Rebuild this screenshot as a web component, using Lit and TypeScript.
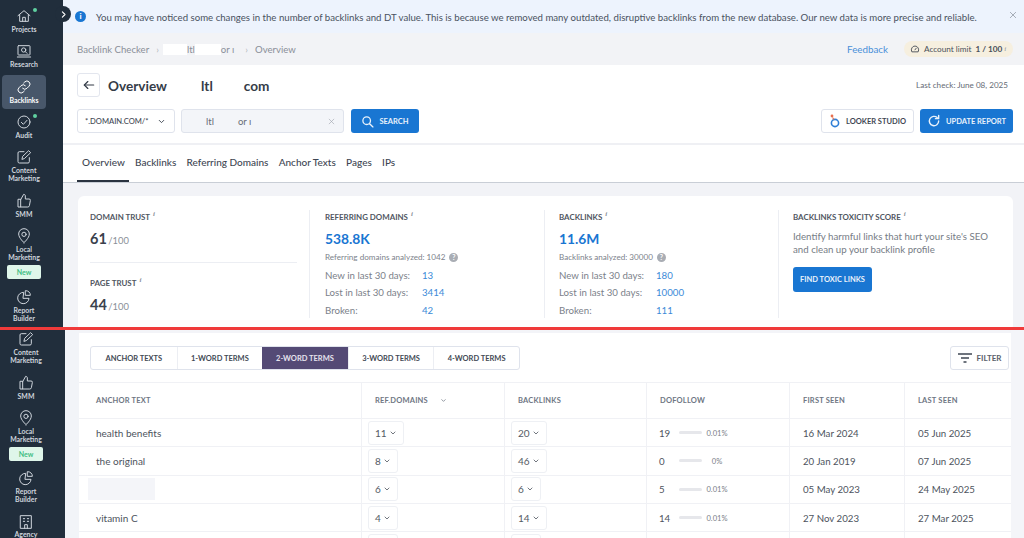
import { LitElement, html, css, svg } from "lit";
import { customElement } from "lit/decorators.js";

const ic = (body: unknown, size = 16, sw = 1.5) => html`<svg width=${size} height=${size} viewBox="0 0 24 24" fill="none" stroke="currentColor" stroke-width=${sw} stroke-linecap="round" stroke-linejoin="round">${body}</svg>`;

const icons: Record<string, unknown> = {
  home: svg`<path d="M3 11.5 12 4l9 7.5"/><path d="M5.5 10v10h13V10"/><path d="M10 20v-6h4v6"/>`,
  research: svg`<rect x="3" y="4" width="18" height="14" rx="1"/><path d="M2 21h20"/><circle cx="11.5" cy="10.5" r="3.2"/><path d="m14 13 2.5 2.5"/>`,
  link: svg`<path d="M10 14a4.500 4.500 0 0 0 6.400 0l3.200-3.200a4.500 4.500 0 0 0-6.400-6.400L11.500 6"/><path d="M14 10a4.500 4.500 0 0 0-6.400 0l-3.200 3.200a4.500 4.500 0 0 0 6.400 6.400l1.700-1.600"/>`,
  audit: svg`<circle cx="12" cy="12" r="9"/><path d="m8 12.500 3 3 5.500-6"/>`,
  edit: svg`<path d="M20 13v6a2 2 0 0 1-2 2H5a2 2 0 0 1-2-2V6a2 2 0 0 1 2-2h7"/><path d="M9 15l1-4L19 2.500l3 3L13 14z"/>`,
  thumb: svg`<path d="M7 10v11H3V10z"/><path d="M7 10l4.500-8c1.600 0 2.500 1 2.500 2.500V9h5.500a2 2 0 0 1 2 2.400l-1.400 7.500a2.500 2.500 0 0 1-2.400 2.100H7"/>`,
  pin: svg`<path d="M12 22s8-7 8-13a8 8 0 1 0-16 0c0 6 8 13 8 13z"/><circle cx="12" cy="9.500" r="3.200"/>`,
  pie: svg`<path d="M11 5a8.500 8.500 0 1 0 8.500 9H11z"/><path d="M14.500 2.500a6.500 6.500 0 0 1 7 7h-7z"/>`,
  agency: svg`<rect x="4" y="2.500" width="16" height="19"/><path d="M8 7h2M14 7h2M8 11h2M14 11h2"/><path d="M10 21.500V16h4v5.500"/>`,
};

type Nav = { l: string[]; i: string; dot?: boolean; on?: boolean; badge?: boolean };
const topNav: Nav[] = [
  { l: ["Projects"], i: "home", dot: true },
  { l: ["Research"], i: "research" },
  { l: ["Backlinks"], i: "link", on: true },
  { l: ["Audit"], i: "audit", dot: true },
  { l: ["Content", "Marketing"], i: "edit" },
  { l: ["SMM"], i: "thumb" },
  { l: ["Local", "Marketing"], i: "pin", badge: true },
  { l: ["Report", "Builder"], i: "pie" },
];
const lowNav: Nav[] = [
  { l: ["Content", "Marketing"], i: "edit" },
  { l: ["SMM"], i: "thumb" },
  { l: ["Local", "Marketing"], i: "pin", badge: true },
  { l: ["Report", "Builder"], i: "pie" },
  { l: ["Agency"], i: "agency" },
];

const rows = [
  ["health benefits", "11", "20", "19", "0.01%", "16 Mar 2024", "05 Jun 2025"],
  ["the original", "8", "46", "0", "0%", "20 Jan 2019", "07 Jun 2025"],
  ["", "6", "6", "5", "0.01%", "05 May 2023", "24 May 2025"],
  ["vitamin C", "4", "14", "14", "0.01%", "27 Nov 2023", "27 Mar 2025"],
  ["", "", "", "", "", "", ""],
];

@customElement("app-root")
export class AppRoot extends LitElement {
  static styles = css`
    :host { display: block; width: 1024px; height: 538px; overflow: hidden; background: #f3f4f8; font-family: Lato, "Liberation Sans", sans-serif; color: #3b4350; }
    * { box-sizing: border-box; }
    .top { display: flex; height: 327px; overflow: hidden; position: relative; }
    .red { height: 3px; background: #f03a3a; }
    .low { display: flex; height: 208px; overflow: hidden; }

    .side { flex: none; width: 63px; background: #212e3c; display: flex; flex-direction: column; padding: 6px 0 0 2px; color: #dfe4ea; }
    .low .side { width: 65px; padding: 0 0 0 4px; }
    .low .nav:first-child { padding-top: 1px; }
    .nav { flex: none; width: 44px; display: flex; flex-direction: column; align-items: center; padding: 2px 0 8px; position: relative; border-radius: 4px; font-size: 6.9px; line-height: 8px; font-weight: 700; text-align: center; color: #cfd5dc; }
    .nav svg { display: block; margin-bottom: 1px; }
    .nav.on { background: #48576a; color: #fff; padding: 4px 0 5px; margin: -1px 0 3px; }
    .dot { position: absolute; top: 2px; right: 9px; width: 4px; height: 4px; border-radius: 50%; background: #5fd0a0; }
    .badge { margin-top: 4px; width: 34px; height: 14px; line-height: 14px; background: #dff6ea; color: #3fbd83; border-radius: 2px; font-size: 7px; }
    .nav.two { padding-bottom: 9px; }
    .nav.withbadge { padding-bottom: 8px; }
    .low .nav.withbadge { padding-bottom: 7px; }
    .low .nav:last-child { padding-bottom: 0; }
    .low .nav:last-child svg { margin-bottom: 0; }
    .toggle { position: absolute; left: 55px; top: 6px; width: 16px; height: 16px; border-radius: 50%; background: #212e3c; color: #fff; display: flex; align-items: center; justify-content: center; }

    .main { flex: 1; min-width: 0; display: flex; flex-direction: column; }
    .banner { height: 33px; flex: none; background: #edf3fd; display: flex; align-items: center; padding: 0 7px 0 12px; font-size: 9.65px; color: #4a5260; }
    .info { flex: none; width: 11px; height: 11px; border-radius: 50%; background: #1976d2; color: #fff; font-size: 8px; line-height: 11px; text-align: center; font-weight: 900; margin-right: 10px; }
    .banner .msg { flex: 1; white-space: nowrap; }
    .x { color: #8b929c; display: flex; margin-top: -4px; }
    .crumbs { height: 32px; flex: none; background: #f2f3f6; display: flex; align-items: center; padding: 0 11px 0 14px; font-size: 9.6px; color: #8a8f98; white-space: nowrap; }
    .crumbs .sep { margin: 0 4px 0 7px; color: #b5b9c0; }
    .crumbs .sep.last { margin: 0 7px 0 11px; }
    .blot { display: inline-block; height: 11px; background: #fff; }
    .blot.a { width: 24px; }
    .blot.b { width: 26px; }
    .crumbs .grow { flex: 1; }
    .fb { color: #4a90d9; font-size: 9.8px; margin-right: 16px; }
    .limit { display: flex; align-items: center; gap: 4px; height: 16px; width: 109px; padding: 0 0 0 6px; background: #f6efdf; border-radius: 8px; font-size: 8.2px; color: #4a505a; }
    .limit svg { flex: none; }
    .limit b { font-weight: 700; white-space: nowrap; }
    .limit span { white-space: nowrap; }
    .limit sup.i { margin-left: -2px; }
    sup.i { font-size: 7px; font-style: italic; color: #8a8f98; line-height: 0; font-family: "Liberation Serif", serif; vertical-align: 4px; margin-left: 3px; }

    .head { height: 80px; background: #fff; border-bottom: 2px solid #eff0f4; padding: 8px 11px 0 14px; flex: none; }
    .titleRow { display: flex; align-items: center; height: 24px; margin-bottom: 12px; }
    .back { width: 23px; height: 24px; border: 1px solid #e3e6ee; border-radius: 3px; display: flex; align-items: center; justify-content: center; color: #333b47; margin-right: 8px; }
    .title { font-size: 13.6px; font-weight: 700; color: #353c48; white-space: pre; flex: 1; display: flex; margin-top: 1px; }
    .title i { font-style: normal; }
    .title .t2 { margin-left: 34px; }
    .title .t3 { margin-left: 31px; }
    .check { font-size: 8.1px; color: #646a74; margin-right: 5px; margin-top: -1px; }
    .searchRow { display: flex; align-items: center; height: 24px; }
    .select { width: 98px; height: 24px; border: 1px solid #dfe3ec; border-radius: 3px; font-size: 7.6px; display: flex; align-items: center; justify-content: space-between; padding: 0 8px 0 7px; color: #3f4753; font-weight: 500; }
    .input { width: 163px; height: 24px; margin-left: 6px; border: 1px solid #dfe3ec; border-radius: 3px; background: #f3f5f9; font-size: 9.5px; color: #666c76; display: flex; align-items: center; padding-left: 24px; position: relative; white-space: pre; }
    .input .gap { margin-left: 24px; }
    .input .x2 { margin-left: auto; margin-right: 8px; color: #a3a8b0; display: flex; }
    .btn { height: 24px; background: #1976d2; color: #e9f2fb; border-radius: 3px; font-size: 7.5px; font-weight: 700; display: flex; align-items: center; justify-content: center; gap: 5px; white-space: nowrap; }
    .search { width: 68px; margin-left: 7px; }
    .spacer { flex: 1; }
    .looker { width: 93px; background: #fff; color: #3f4753; border: 1px solid #dfe3ec; gap: 5px; }
    .update { width: 93px; margin-left: 6px; }

    .tabs { height: 38px; background: #fff; border-bottom: 1px solid #c9ced6; display: flex; padding-left: 14px; flex: none; font-size: 10px; font-weight: 500; color: #3e4652; }
    .tab { padding: 11px 5px 0; height: 36px; margin-right: .3px; white-space: nowrap; }
    .tab.on { border-bottom: 2px solid #2a3340; height: 37px; width: 52px; margin-right: 1px; }

    .body { flex: 1; background: #f2f3f7; padding: 13px 11px 0 15px; min-height: 0; }
    .card { height: 135px; background: #fff; border-radius: 6px; display: grid; grid-template-columns: 232px 235px 234px 1fr; padding: 14px 0 0 0; }
    .col { height: 108px; padding: 1px 13px 0 14px; border-right: 1px solid #eceef3; }
    .col:first-child { padding-left: 12px; }
    .col:nth-child(2) { padding-left: 15px; }
    .col:last-child { border-right: 0; }
    .lbl { font-size: 7.9px; font-weight: 700; color: #50565f; line-height: 12px; white-space: nowrap; }
    .score { font-size: 14.5px; font-weight: 700; color: #3a414c; margin-top: 7px; line-height: 18px; }
    .score small { font-size: 9.4px; font-weight: 400; color: #8a8f98; margin-left: -2px; }
    .hr { height: 1px; background: #eceef3; margin: 12px 0 14px; width: 207px; }
    .big { font-size: 13.8px; font-weight: 700; color: #1976d2; line-height: 18px; margin-top: 7px; }
    .sub { font-size: 8.1px; color: #7c828b; margin-top: 3px; line-height: 12px; display: flex; align-items: center; gap: 4px; }
    .q { width: 9px; height: 9px; border-radius: 50%; background: #a9adb4; color: #fff; font-size: 7px; line-height: 9px; text-align: center; font-weight: 700; }
    .stat { display: grid; grid-template-columns: 97px 1fr; font-size: 9.7px; color: #7b818a; line-height: 17.3px; }
    .stats { margin-top: 4px; }
    .stat a { color: #3b8ad8; }
    .desc { font-size: 9.7px; line-height: 13px; color: #767c85; margin-top: 7px; white-space: nowrap; }
    .toxic { width: 79px; height: 25px; margin-top: 11px; }

    .gutter { flex: none; width: 14px; background: #f2f4f8; }
    .sheet { flex: none; width: 932px; margin-top: 3px; background: #fff; display: flex; flex-direction: column; }
    .rail { flex: 1; background: #f4f5f9; }
    .bar { display: flex; align-items: flex-start; justify-content: space-between; padding: 13px 2px 0 11px; height: 49px; flex: none; }
    .seg { display: flex; height: 24px; border: 1px solid #dfe3ec; border-radius: 3px; overflow: hidden; }
    .seg div { width: 85.6px; display: flex; align-items: center; justify-content: center; font-size: 7.5px; font-weight: 700; color: #434a55; border-left: 1px solid #eceef3; white-space: nowrap; }
    .seg div:first-child { border-left: 0; }
    .seg .on { background: #544a75; color: #e6e3ee; border-left: 0; }
    .filter { width: 59px; height: 24px; border: 1px solid #dfe3ec; border-radius: 3px; display: flex; align-items: center; justify-content: center; gap: 5px; font-size: 8px; font-weight: 700; color: #5a606a; }
    .row { flex: none; display: grid; grid-template-columns: 282px 143px 142px 143px 115px 107px; height: 28.3px; border-bottom: 1px solid #f0f1f5; }
    .row.h { height: 37px; border-top: 1px solid #f0f1f5; }
    .c { border-left: 1px solid #f0f1f5; display: flex; align-items: center; padding-left: 13px; font-size: 9.7px; color: #4d535d; white-space: nowrap; }
    .c:first-child { border-left: 0; padding-left: 17px; font-size: 10px; }
    .h .c, .h .c:first-child { font-size: 7.5px; font-weight: 700; color: #6e7683; letter-spacing: .2px; }
    .caret { margin-left: 12px; display: flex; }
    .c.pcell { padding-left: 6px; }
    .pill { height: 24px; min-width: 30px; padding: 0 6px; border: 1px solid #eef0f4; border-radius: 3px; display: inline-flex; align-items: center; gap: 2px; font-size: 10px; color: #555b65; }
    .pill svg { display: block; }
    .c.dcell { padding-left: 12px; }
    .dnum { width: 20px; }
    .track { width: 23px; height: 3px; background: #e6e7eb; border-radius: 2px; margin-right: 4px; flex: none; }
    .pct { font-size: 7.6px; color: #7b818a; width: 22px; text-align: center; }
    .mask { width: 67px; height: 22px; background: #f4f5f9; margin-left: -8px; }
  `;

  private nav(n: Nav) {
    const cls = ["nav", n.on ? "on" : "", n.l.length > 1 ? "two" : "", n.badge ? "withbadge" : ""].join(" ");
    return html`<div class=${cls}>
      ${ic(icons[n.i], 16, 1.5)}
      ${n.dot ? html`<span class="dot"></span>` : ""}
      ${n.l.map((t) => html`<div>${t}</div>`)}
      ${n.badge ? html`<div class="badge">New</div>` : ""}
    </div>`;
  }

  private chev(s = 8) {
    return ic(svg`<path d="m6 9 6 6 6-6"/>`, s, 2.5);
  }

  private cross(s = 8) {
    return ic(svg`<path d="M4 4l16 16M20 4 4 20"/>`, s, 2.2);
  }

  private stat(a: string, b: string) {
    return html`<div class="stat"><span>${a}</span><a>${b}</a></div>`;
  }

  render() {
    return html`
      <section class="top">
        <aside class="side">${topNav.map((n) => this.nav(n))}</aside>
        <div class="toggle">${ic(svg`<path d="m9 5 7 7-7 7"/>`, 9, 3)}</div>
        <div class="main">
          <div class="banner">
            <span class="info">i</span>
            <span class="msg">You may have noticed some changes in the number of backlinks and DT value. This is because we removed many outdated, disruptive backlinks from the new database. Our new data is more precise and reliable.</span>
            <span class="x">${this.cross(8)}</span>
          </div>
          <div class="crumbs">
            <span>Backlink Checker</span><span class="sep">›</span>
            <span class="blot a"></span><span>ltl</span><span class="blot b"></span><span>or ı</span>
            <span class="sep last">›</span><span>Overview</span>
            <span class="grow"></span>
            <span class="fb">Feedback</span>
            <span class="limit">${ic(svg`<path d="M4 18a9 9 0 1 1 16 0z"/><path d="m12 14 3-4"/>`, 10, 2.2)}<span>Account limit</span><b>1 / 100</b><sup class="i">i</sup></span>
          </div>
          <div class="head">
            <div class="titleRow">
              <div class="back">${ic(svg`<path d="M20 12H4"/><path d="m10 6-6 6 6 6"/>`, 14, 2)}</div>
              <div class="title"><i>Overview</i><i class="t2">ltl</i><i class="t3">com</i></div>
              <div class="check">Last check: June 08, 2025</div>
            </div>
            <div class="searchRow">
              <div class="select"><span>*.DOMAIN.COM/*</span>${this.chev(9)}</div>
              <div class="input"><span>ltl</span><span class="gap">or ı</span><span class="x2">${this.cross(7)}</span></div>
              <div class="btn search">${ic(svg`<circle cx="10.5" cy="10.5" r="7"/><path d="m16 16 6 6"/>`, 13, 2.4)}SEARCH</div>
              <div class="spacer"></div>
              <div class="btn looker"><svg width="12" height="16" viewBox="0 0 12 16" fill="none"><circle cx="6" cy="10" r="3.6" stroke="#2f7fd6" stroke-width="1.6"/><circle cx="3" cy="3" r="1.4" fill="#e8704f"/><path d="M3.500 4.500 5 6.500" stroke="#e8704f" stroke-width="1.200"/></svg>LOOKER STUDIO</div>
              <div class="btn update">${ic(svg`<path d="M20 12a8 8 0 1 1-2.500-5.800"/><path d="M20 2.500V8h-5.500"/>`, 14, 2.4)}UPDATE REPORT</div>
            </div>
          </div>
          <div class="tabs">
            <div class="tab on">Overview</div>
            <div class="tab">Backlinks</div>
            <div class="tab">Referring Domains</div>
            <div class="tab">Anchor Texts</div>
            <div class="tab">Pages</div>
            <div class="tab">IPs</div>
          </div>
          <div class="body">
            <div class="card">
              <div class="col">
                <div class="lbl">DOMAIN TRUST<sup class="i">i</sup></div>
                <div class="score">61 <small>/100</small></div>
                <div class="hr"></div>
                <div class="lbl">PAGE TRUST<sup class="i">i</sup></div>
                <div class="score">44 <small>/100</small></div>
              </div>
              <div class="col">
                <div class="lbl">REFERRING DOMAINS<sup class="i">i</sup></div>
                <div class="big">538.8K</div>
                <div class="sub">Referring domains analyzed: 1042 <span class="q">?</span></div>
                <div class="stats">
                  ${this.stat("New in last 30 days:", "13")}
                  ${this.stat("Lost in last 30 days:", "3414")}
                  ${this.stat("Broken:", "42")}
                </div>
              </div>
              <div class="col">
                <div class="lbl">BACKLINKS<sup class="i">i</sup></div>
                <div class="big">11.6M</div>
                <div class="sub">Backlinks analyzed: 30000 <span class="q">?</span></div>
                <div class="stats">
                  ${this.stat("New in last 30 days:", "180")}
                  ${this.stat("Lost in last 30 days:", "10000")}
                  ${this.stat("Broken:", "111")}
                </div>
              </div>
              <div class="col">
                <div class="lbl">BACKLINKS TOXICITY SCORE<sup class="i">i</sup></div>
                <div class="desc">Identify harmful links that hurt your site's SEO<br />and clean up your backlink profile</div>
                <div class="btn toxic">FIND TOXIC LINKS</div>
              </div>
            </div>
          </div>
        </div>
      </section>
      <div class="red"></div>
      <section class="low">
        <aside class="side">${lowNav.map((n) => this.nav(n))}</aside>
        <div class="gutter"></div>
        <div class="sheet">
          <div class="bar">
            <div class="seg">
              <div>ANCHOR TEXTS</div><div>1-WORD TERMS</div><div class="on">2-WORD TERMS</div><div>3-WORD TERMS</div><div>4-WORD TERMS</div>
            </div>
            <div class="filter"><svg width="14" height="10" viewBox="0 0 14 10" fill="none" stroke="#3f4753" stroke-width="1.4"><path d="M0 1h14M3 5h8M5.500 9h3"/></svg>FILTER</div>
          </div>
          <div class="row h">
            <div class="c">ANCHOR TEXT</div>
            <div class="c">REF.DOMAINS<span class="caret">${this.chev(7)}</span></div>
            <div class="c">BACKLINKS</div>
            <div class="c">DOFOLLOW</div>
            <div class="c">FIRST SEEN</div>
            <div class="c">LAST SEEN</div>
          </div>
          ${rows.map((r, i) => html`<div class="row">
            <div class="c">${r[0] || (i === 2 ? html`<span class="mask"></span>` : "")}</div>
            <div class="c pcell">${r[1] ? html`<span class="pill">${r[1]} ${this.chev(8)}</span>` : html`<span class="pill"></span>`}</div>
            <div class="c pcell">${r[2] ? html`<span class="pill">${r[2]} ${this.chev(8)}</span>` : html`<span class="pill"></span>`}</div>
            <div class="c dcell">${r[3] ? html`<span class="dnum">${r[3]}</span><span class="track"></span><span class="pct">${r[4]}</span>` : ""}</div>
            <div class="c">${r[5]}</div>
            <div class="c">${r[6]}</div>
          </div>`)}
        </div>
        <div class="rail"></div>
      </section>
    `;
  }
}
